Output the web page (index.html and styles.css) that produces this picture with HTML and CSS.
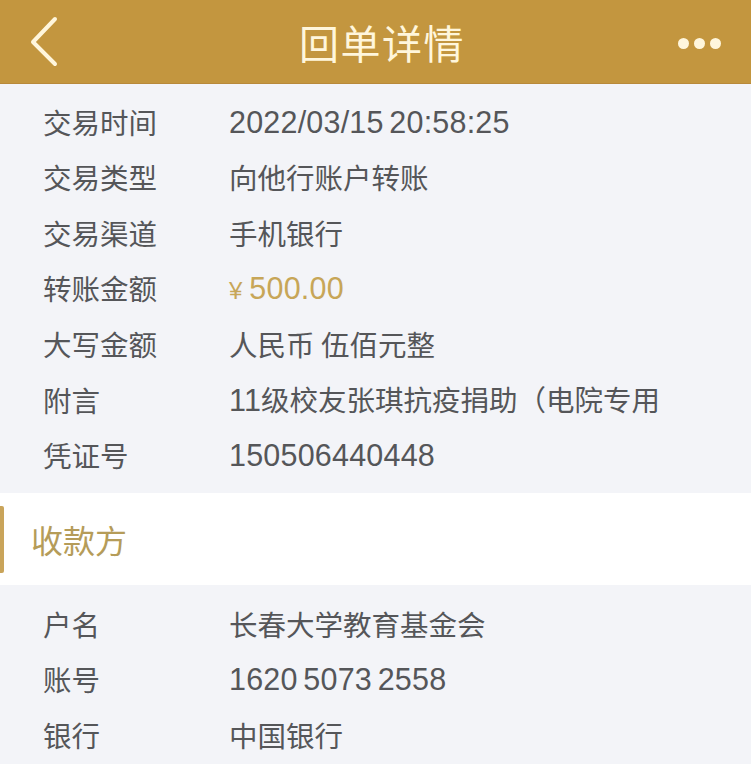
FILE: index.html
```html
<!DOCTYPE html>
<html lang="zh-CN">
<head>
<meta charset="utf-8">
<link rel="stylesheet" href="styles.css">
</head>
<body>
<header class="bar">
  <svg class="back" width="40" height="60" viewBox="0 0 40 60"><polyline points="35,22 13,45 35,67" transform="translate(0,-15)" fill="none" stroke="#fff6dc" stroke-width="4" stroke-linecap="round" stroke-linejoin="round"/></svg>
  <h1 class="title">回单详情</h1>
  <div class="more"><i></i><i></i><i></i></div>
</header>
<section class="list first">
  <div class="row"><span class="k">交易时间</span><span class="v"><span class="n">2022/03/15 20:58:25</span></span></div>
  <div class="row"><span class="k">交易类型</span><span class="v">向他行账户转账</span></div>
  <div class="row"><span class="k">交易渠道</span><span class="v">手机银行</span></div>
  <div class="row"><span class="k">转账金额</span><span class="v gold"><span class="yen">¥</span><span class="n">500.00</span></span></div>
  <div class="row"><span class="k">大写金额</span><span class="v">人民币 伍佰元整</span></div>
  <div class="row"><span class="k">附言</span><span class="v"><span class="n">11</span>级校友张琪抗疫捐助（电院专用</span></div>
  <div class="row"><span class="k">凭证号</span><span class="v"><span class="n">150506440448</span></span></div>
</section>
<div class="section-head"><span class="mark"></span><span class="sh-text">收款方</span></div>
<section class="list second">
  <div class="row"><span class="k">户名</span><span class="v">长春大学教育基金会</span></div>
  <div class="row"><span class="k">账号</span><span class="v"><span class="n">1620 5073 2558</span></span></div>
  <div class="row"><span class="k">银行</span><span class="v">中国银行</span></div>
</section>
</body>
</html>
```
FILE: styles.css
```css
html, body { margin: 0; padding: 0; }
body {
  width: 751px;
  height: 764px;
  overflow: hidden;
  background: #f3f4f8;
  font-family: "Noto Sans CJK SC", "Noto Sans", sans-serif;
  color: #555659;
}
.bar {
  height: 83px;
  background: #c3963f;
  display: flex;
  align-items: center;
  justify-content: space-between;
  padding: 0 30px 0 20px;
  border-bottom: 1px solid #b8893a;
}
.back { display: block; }
.title {
  margin: 0 0 0 26px;
  font-size: 40px;
  font-weight: 400;
  color: #fff6dc;
  letter-spacing: 1.5px;
  line-height: 1;
}
.more { display: flex; gap: 5px; padding-top: 4px; }
.more i { width: 11px; height: 11px; border-radius: 50%; background: #fff6dc; display: block; }
.list { display: flex; flex-direction: column; }
.list.first { padding: 10px 0 10px; }
.list.second { padding: 11px 0 0; }
.row {
  height: 55.6px;
  display: flex;
  align-items: center;
  padding-left: 43px;
  font-size: 28.5px;
  line-height: 1;
}
.k { width: 186px; flex: none; color: #555659; }
.v {
  color: #555659;
  white-space: nowrap;
  font-family: "Noto Sans CJK SC", sans-serif;
}
.n {
  font-family: "Liberation Sans", sans-serif;
  font-size: 30.5px;
  letter-spacing: 0.2px;
  word-spacing: -3px;
}
.yen { font-family: "Liberation Sans", sans-serif; font-size: 24px; margin-right: 7px; }
.v.gold { color: #c7a658; }
.section-head {
  height: 92px;
  background: #ffffff;
  display: flex;
  align-items: center;
}
.mark { width: 4px; height: 67px; background: #c9a45a; border-radius: 0 2px 2px 0; flex: none; }
.sh-text { margin-left: 27px; font-size: 32px; color: #b59c59; line-height: 1; }
```
